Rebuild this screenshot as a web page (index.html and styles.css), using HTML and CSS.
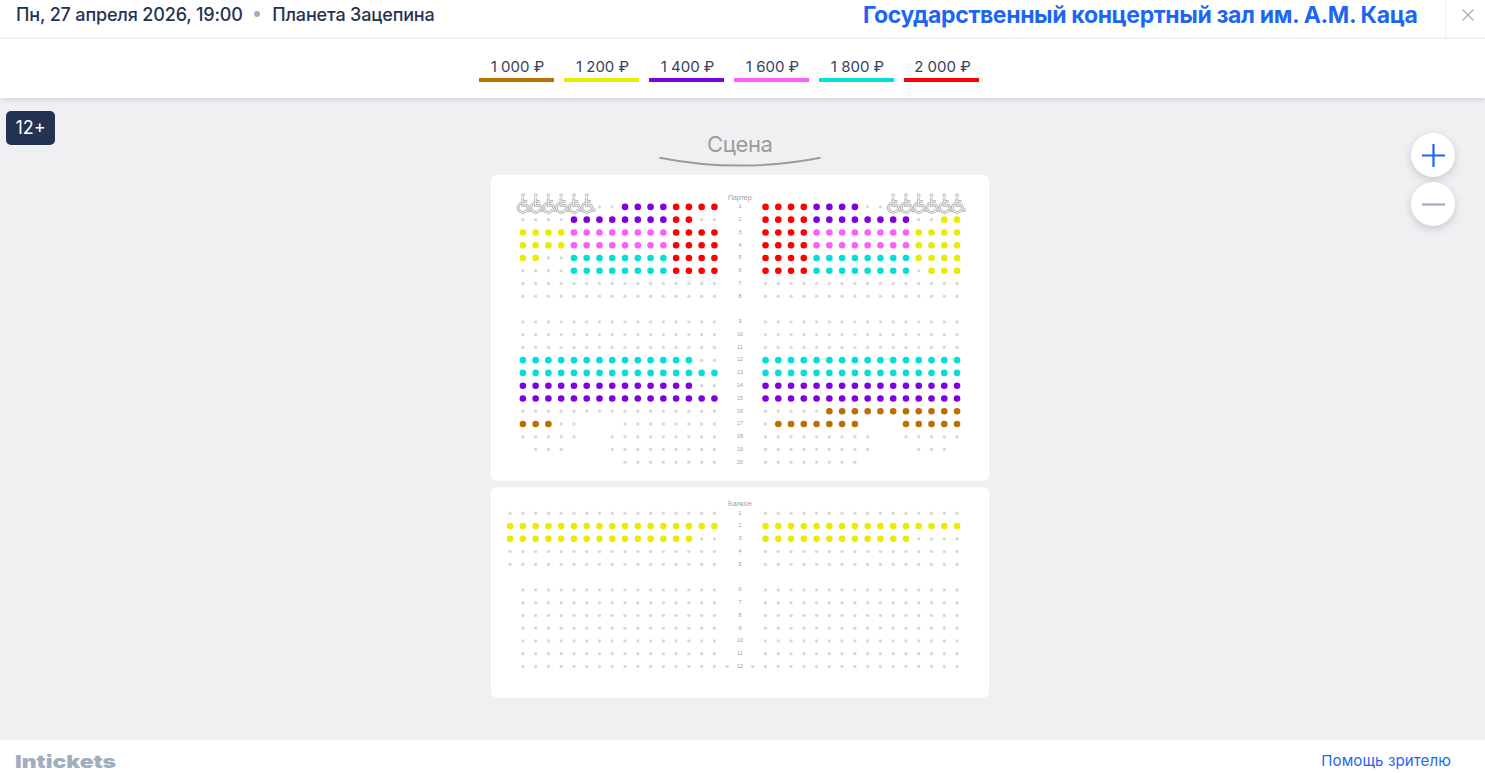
FILE: index.html
```
<!DOCTYPE html>
<html lang="ru">
<head>
  <meta charset="UTF-8">
  <meta name="viewport" content="width=device-width, initial-scale=1.0">
  <title>Планета Зацепина - Intickets</title>
  <link rel="stylesheet" href="styles.css">
</head>
<body>
  <header class="header">
    <div class="event">
      <span class="event-date">Пн, 27 апреля 2026, 19:00</span>
      <span class="event-dot"></span>
      <span class="event-name">Планета Зацепина</span>
    </div>
    <a href="#" class="venue">Государственный концертный зал им. А.М. Каца</a>
    <button class="close" aria-label="Закрыть">
      <svg width="12" height="12" viewBox="0 0 12 12"><path d="M.5 .5l11 11M11.5 .5l-11 11"/></svg>
    </button>
  </header>

  <div class="prices">
    <div class="price price-b">1 000 ₽</div>
    <div class="price price-y">1 200 ₽</div>
    <div class="price price-v">1 400 ₽</div>
    <div class="price price-p">1 600 ₽</div>
    <div class="price price-c">1 800 ₽</div>
    <div class="price price-r">2 000 ₽</div>
  </div>

  <main class="map">
    <svg class="hall" id="hall" width="500" height="600" viewBox="490 120 500 600">
      <defs>
        <g id="wheelchair">
          <path class="chair-line" d="M-.2-8.8v7.2h4.6l2.4 5.200 2-.9M0-5.600h4.400M-1.200-3.900a4.800 4.800 0 1 0 5.800 6.200"/>
          <path class="chair-fill" d="M-.2-8.8v7.2h4.6l2.4 5.200 2-.9M0-5.600h4.400M-1.200-3.900a4.800 4.800 0 1 0 5.800 6.200"/>
          <circle class="chair-head" cx="0" cy="-11.6" r="1.5"/>
        </g>
      </defs>
      <text class="stage" x="739.8" y="152">Сцена</text>
      <path class="stage-line" d="M659.5 157.7Q740 173.500 820.500 157.7"/>
      <rect class="sector" x="491" y="174.800" width="498" height="306" rx="6"/>
      <rect class="sector" x="491" y="487.300" width="498" height="210.500" rx="6"/>
      <text class="sector-name" x="739.8" y="200">Партер</text>
      <text class="sector-name" x="739.8" y="506.200">Балкон</text>
    </svg>

    <span class="age">12+</span>

    <div class="zoom">
      <button class="zoom-btn" aria-label="Увеличить">
        <svg width="24" height="24" viewBox="0 0 24 24"><path d="M12.500 1v23M1 12.500h23"/></svg>
      </button>
      <button class="zoom-btn zoom-out" aria-label="Уменьшить">
        <svg width="24" height="24" viewBox="0 0 24 24"><path d="M1 12.500h23"/></svg>
      </button>
    </div>
  </main>

  <footer class="footer">
    <svg class="logo" width="104" height="22" viewBox="0 0 104 22">
      <text x="0" y="18" textLength="101" lengthAdjust="spacingAndGlyphs">Intickets</text>
    </svg>
    <a href="#" class="help">Помощь зрителю</a>
  </footer>

  <script src="hall.js"></script>
</body>
</html>
```
FILE: styles.css
```
body {
  font-family: Inter, 'Noto Sans', sans-serif;
  background-color: #fff;
  color: #243353;
  margin: 0;
  height: 100vh;
  display: flex;
  flex-direction: column;
  overflow: hidden;
}

a {
  color: #1d66f5;
  text-decoration: none;
}

button {
  border: 0;
  padding: 0;
  background: #fff;
  cursor: pointer;
}

.header {
  display: flex;
  align-items: center;
  height: 37px;
  border-bottom: 2px solid #edf2f7;
  flex-shrink: 0;
}

.event {
  display: flex;
  align-items: center;
  flex: 1;
  padding: 0 0 8px 16px;
  font-size: 18px;
  line-height: 22px;
  font-weight: 500;
  letter-spacing: -0.16px;
  white-space: nowrap;
}

.event-dot {
  width: 6px;
  height: 6px;
  border-radius: 50%;
  background-color: #a0aec0;
  margin: 0 12px 0 11.5px;
  position: relative;
  top: -1px;
}

.venue {
  font-size: 23px;
  line-height: 28px;
  font-weight: 700;
  letter-spacing: -0.36px;
  padding-bottom: 8px;
  margin-right: 27.5px;
  white-space: nowrap;
}

.close {
  width: 40px;
  height: 37px;
  border-left: 1px solid #edf2f7;
  padding: 0 0 7px 5px;
}

.close svg {
  display: block;
  margin: 0 auto;
  stroke: #a0aec0;
  stroke-width: 1.2;
}

.prices {
  display: flex;
  justify-content: center;
  gap: 10px;
  height: 43px;
  padding: 16px 27px 0 0;
  background-color: #fff;
  box-shadow: 0 3px 5px -1px rgba(36, 51, 83, 0.15);
  flex-shrink: 0;
  position: relative;
  z-index: 1;
}

.price {
  box-sizing: border-box;
  width: 75px;
  height: 27px;
  padding-left: 2px;
  border-bottom: 4px solid;
  color: #35425f;
  font-size: 15px;
  line-height: 23px;
  text-align: center;
}

.price-b { border-color: #ba6f00; }
.price-y { border-color: #ebeb00; }
.price-v { border-color: #7f00e0; }
.price-p { border-color: #ff5cff; }
.price-c { border-color: #00e0d9; }
.price-r { border-color: #ff0000; }

.map {
  position: relative;
  flex: 1;
  display: flex;
  justify-content: center;
  padding: 22px 5px 0 0;
  background-color: #f0f0f2;
  overflow: hidden;
}

.hall {
  font-family: 'Liberation Sans', sans-serif;
  text-anchor: middle;
  flex-shrink: 0;
}

.stage {
  font-family: Inter, sans-serif;
  font-size: 22px;
  letter-spacing: -0.4px;
  fill: #9c9c9c;
}

.stage-line {
  fill: none;
  stroke: #9c9c9c;
  stroke-width: 2;
}

.sector {
  fill: #fff;
}

.sector-name {
  font-size: 7px;
  fill: #9c9c9c;
}

.row-number {
  font-size: 5.5px;
  fill: #9c9c9c;
}

.seat { fill: #d9d9d9; }
.seat-b { fill: #ba6f00; }
.seat-y { fill: #ebeb00; }
.seat-v { fill: #7f00e0; }
.seat-p { fill: #ff5cff; }
.seat-c { fill: #00e0d9; }
.seat-r { fill: #ff0000; }

.chair-line {
  fill: none;
  stroke: #b0b0b0;
  stroke-width: 2.8;
}

.chair-fill {
  fill: none;
  stroke: #f0f0f0;
  stroke-width: 1.1;
}

.chair-head {
  fill: #f0f0f0;
  stroke: #b0b0b0;
  stroke-width: 0.8;
}

.age {
  position: absolute;
  left: 6px;
  top: 13px;
  width: 49px;
  height: 34px;
  border-radius: 5px;
  background-color: #243353;
  color: #fff;
  font-size: 18px;
  line-height: 34px;
  text-align: center;
}

.zoom {
  position: absolute;
  top: 35px;
  right: 30px;
  display: flex;
  flex-direction: column;
  gap: 5px;
}

.zoom-btn {
  display: flex;
  align-items: center;
  justify-content: center;
  width: 44px;
  height: 44px;
  border-radius: 50%;
  box-shadow: 0 3px 8px rgba(36, 51, 83, 0.2);
  stroke: #1d66f5;
  stroke-width: 2.2;
}

.zoom-out {
  stroke: #a0aec0;
}

.footer {
  display: flex;
  align-items: center;
  justify-content: space-between;
  height: 33px;
  padding: 0 34px 0 15px;
  box-sizing: border-box;
  flex-shrink: 0;
}

.logo {
  margin-top: 9px;
  font-weight: 900;
  font-size: 18px;
  line-height: 1;
  fill: #a0aec0;
  overflow: visible;
}

.help {
  font-size: 15px;
  line-height: 20px;
  letter-spacing: 0.12px;
  margin-top: 8px;
}
```
FILE: hall.js
```
// b, y, v, p, c, r - price colors, "." - sold, "w" - wheelchair, "_" - no seat
// 36 columns: 17 on the left, 3 for the aisle, 16 on the right
const dots = '_................___................';
const full = '.................___................';

const parterre = [
  [1, '_wwwwww..vvvvrrrr___rrrrvvvv..wwwwww'],
  [2, '_....vvvvvvvvrr..___rrrrvvvvvvvv..yy'],
  [3, '_yyyypppppppprrrr___rrrrppppppppyyyy'],
  [4, '_yyyypppppppprrrr___rrrrppppppppyyyy'],
  [5, '_yy..ccccccccrrrr___rrrrccccccccyyyy'],
  [6, '_....ccccccccrrrr___rrrrcccccccc.yyy'],
  [7, dots],
  [8, dots],
  null,
  [9, dots],
  [10, dots],
  [11, dots],
  [12, '_cccccccccccccc..___cccccccccccccccc'],
  [13, '_cccccccccccccccc___cccccccccccccccc'],
  [14, '_vvvvvvvvvvvvvv..___vvvvvvvvvvvvvvvv'],
  [15, '_vvvvvvvvvvvvvvvv___vvvvvvvvvvvvvvvv'],
  [16, '_................___.....bbbbbbbbbbb'],
  [17, '_bbb..___........___.bbbbbbb___bbbbb'],
  [18, '_.....__.........___.........__.....'],
  [19, '__...___.........___.........___..._'],
  [20, '_________........___........________']
];

const balcony = [
  [1, full],
  [2, 'yyyyyyyyyyyyyyyyy___yyyyyyyyyyyyyyyy'],
  [3, 'yyyyyyyyyyyyyyy..___yyyyyyyyyyyy....'],
  [4, full],
  [5, full],
  null,
  [6, dots],
  [7, dots],
  [8, dots],
  [9, dots],
  [10, dots],
  [11, dots],
  [12, '_................._.................']
];

const step = 12.77;
const left = 510.1;
const hall = document.getElementById('hall');

function add(name, attrs, text) {
  const el = document.createElementNS('http://www.w3.org/2000/svg', name);
  for (const key in attrs) {
    el.setAttribute(key, attrs[key]);
  }
  if (text) {
    el.textContent = text;
  }
  hall.appendChild(el);
}

function drawSector(rows, top) {
  rows.forEach(function(row, index) {
    if (!row) return;
    const y = top + index * step;
    add('text', { class: 'row-number', x: left + 18 * step, y: y + 1.3 }, row[0]);

    row[1].split('').forEach(function(seat, col) {
      const x = left + col * step;
      if (seat === '_') return;
      if (seat === 'w') {
        add('use', { href: '#wheelchair', x: x, y: y });
      } else if (seat === '.') {
        add('circle', { class: 'seat', cx: x, cy: y, r: 1.7 });
      } else {
        add('circle', { class: 'seat-' + seat, cx: x, cy: y, r: 3.3 });
      }
    });
  });
}

drawSector(parterre, 206.9);
drawSector(balcony, 513.3);
```
